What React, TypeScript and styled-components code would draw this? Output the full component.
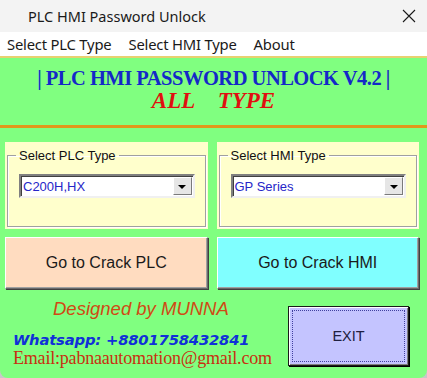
import React from 'react';
import styled, { createGlobalStyle } from 'styled-components';

const GlobalStyle = createGlobalStyle`
  html, body {
    margin: 0;
    padding: 0;
    background: #c8c8c8;
  }
`;

const Window = styled.div`
  width: 427px;
  height: 378px;
  display: flex;
  flex-direction: column;
  background: #80ff80;
  border-radius: 0 0 8px 8px;
  overflow: hidden;
  font-family: 'Liberation Sans', Arial, sans-serif;
`;

const TitleBar = styled.div`
  height: 32px;
  flex: none;
  display: flex;
  align-items: center;
  justify-content: space-between;
  padding: 0 10px 0 28px;
  background: #f3f3f3;
  font-family: 'Noto Sans', 'Open Sans', sans-serif;
  font-size: 14.5px;
  color: #1a1a1a;
`;

const CloseButton = styled.button`
  border: none;
  background: transparent;
  padding: 0;
  width: 16px;
  height: 16px;
  display: flex;
  align-items: center;
  justify-content: center;
`;

const MenuBar = styled.div`
  height: 24px;
  flex: none;
  display: flex;
  align-items: center;
  gap: 17px;
  padding: 0 7px;
  background: #ffffff;
  border-bottom: 2px solid #e8d070;
  font-family: 'Noto Sans', 'Open Sans', sans-serif;
  font-size: 14.8px;
  color: #1a1a1a;
`;

const MenuItem = styled.span`
  letter-spacing: -0.2px;
`;

const Header = styled.div`
  display: flex;
  flex-direction: column;
  align-items: center;
  padding-top: 9px;
  height: 58px;
  flex: none;
  border-bottom: 3px solid #e0981c;
  font-family: 'Liberation Serif', 'Times New Roman', serif;
  font-weight: bold;
`;

const HeadTitle = styled.div`
  color: #1428c8;
  font-size: 20.5px;
  line-height: 22px;
  letter-spacing: -0.5px;
`;

const HeadSub = styled.div`
  color: #e01010;
  font-size: 23px;
  line-height: 23px;
  font-style: italic;
  white-space: pre;
  word-spacing: 2px;
`;

const Content = styled.div`
  display: flex;
  flex-direction: column;
  padding: 14px 8px 0 5px;
`;

const Row = styled.div<{ gap: number }>`
  display: grid;
  grid-template-columns: 1fr 1fr;
  column-gap: ${({ gap }) => gap}px;
`;

const Panel = styled.div`
  background: #ffffcc;
  height: 87px;
  padding: 6px 2px 2px 2px;
  box-sizing: border-box;
`;

const Group = styled.fieldset`
  margin: 0;
  height: 100%;
  box-sizing: border-box;
  padding: 11px 10px 0 11px;
  border: 1px solid #a0a0a0;
  box-shadow: inset 1px 1px 0 #ffffff, 1px 1px 0 #ffffff;
`;

const Legend = styled.legend`
  padding: 0 3px;
  margin-left: -3px;
  font-size: 13px;
  color: #111;
`;

const Combo = styled.div`
  height: 24px;
  display: flex;
  align-items: stretch;
  background: #ffffff;
  border: 2px solid;
  border-color: #808080 #f0f0f0 #f0f0f0 #808080;
  box-sizing: border-box;
  box-shadow: inset 1px 1px 0 #404040;
`;

const ComboText = styled.span`
  flex: 1;
  display: flex;
  align-items: center;
  padding-left: 2px;
  font-size: 13px;
  color: #2626c8;
`;

const ComboArrow = styled.span`
  width: 17px;
  margin: 1px;
  background: #e6e6e6;
  border: 1px solid;
  border-color: #ffffff #7a7a7a #7a7a7a #ffffff;
  display: flex;
  align-items: center;
  justify-content: center;
  &::after {
    content: '';
    border-left: 4px solid transparent;
    border-right: 4px solid transparent;
    border-top: 4px solid #000;
    margin-top: 1px;
  }
`;

const BigButton = styled.button<{ bg: string }>`
  height: 52px;
  margin-top: 8px;
  background: ${({ bg }) => bg};
  border: 1px solid;
  border-color: #ffffff #6a6a6a #6a6a6a #ffffff;
  box-shadow: 1px 1px 0 #404040, inset -1px -1px 0 #a0a0a0;
  font-family: 'Liberation Sans', Arial, sans-serif;
  font-size: 16px;
  color: #1a1a1a;
  padding: 0;
`;

const Footer = styled.div`
  display: flex;
  justify-content: space-between;
  padding: 8px 18px 0 8px;
`;

const Credits = styled.div`
  display: flex;
  flex-direction: column;
  padding-left: 5px;
`;

const Designer = styled.div`
  padding-left: 40px;
  font-style: italic;
  font-size: 18.5px;
  line-height: 23px;
  color: #d04a14;
`;

const Whatsapp = styled.div`
  margin-top: 11px;
  font-family: 'DejaVu Sans', Verdana, sans-serif;
  font-weight: bold;
  font-style: italic;
  font-size: 14.8px;
  line-height: 17px;
  color: #1030d8;
  letter-spacing: -0.2px;
`;

const Email = styled.div`
  font-family: 'Liberation Serif', 'Times New Roman', serif;
  font-size: 18px;
  line-height: 20px;
  color: #c83010;
  letter-spacing: -0.2px;
`;

const ExitButton = styled.button`
  width: 121px;
  height: 60px;
  margin-top: 9px;
  padding: 3px;
  background: #c4c4ff;
  border: 1px solid #1a1a1a;
  box-shadow: inset 1px 1px 0 #ffffff, inset -1px -1px 0 #808080, 1px 1px 0 #000;
`;

const ExitFocus = styled.span`
  display: flex;
  align-items: center;
  justify-content: center;
  height: 100%;
  box-sizing: border-box;
  border: 1px dotted #4040a0;
  font-family: 'Liberation Sans', Arial, sans-serif;
  font-size: 14.5px;
  color: #202040;
`;

const App: React.FC = () => {
  return (
    <>
      <GlobalStyle />
      <Window>
        <TitleBar>
          <span>PLC HMI Password Unlock</span>
          <CloseButton aria-label="Close">
            <svg width="14" height="14" viewBox="0 0 14 14">
              <path d="M1 1 L13 13 M13 1 L1 13" stroke="#1a1a1a" strokeWidth="1.1" />
            </svg>
          </CloseButton>
        </TitleBar>
        <MenuBar>
          <MenuItem>Select PLC Type</MenuItem>
          <MenuItem>Select HMI Type</MenuItem>
          <MenuItem>About</MenuItem>
        </MenuBar>
        <Header>
          <HeadTitle>| PLC HMI PASSWORD UNLOCK V4.2 |</HeadTitle>
          <HeadSub>{'ALL   TYPE'}</HeadSub>
        </Header>
        <Content>
          <Row gap={9}>
            <Panel>
              <Group>
                <Legend>Select PLC Type</Legend>
                <Combo>
                  <ComboText>C200H,HX</ComboText>
                  <ComboArrow />
                </Combo>
              </Group>
            </Panel>
            <Panel>
              <Group>
                <Legend>Select HMI Type</Legend>
                <Combo>
                  <ComboText>GP Series</ComboText>
                  <ComboArrow />
                </Combo>
              </Group>
            </Panel>
          </Row>
          <Row gap={9}>
            <BigButton bg="#ffdcc0">Go to Crack PLC</BigButton>
            <BigButton bg="#80ffff">Go to Crack HMI</BigButton>
          </Row>
        </Content>
        <Footer>
          <Credits>
            <Designer>Designed by MUNNA</Designer>
            <Whatsapp>Whatsapp: +8801758432841</Whatsapp>
            <Email>Email:pabnaautomation@gmail.com</Email>
          </Credits>
          <ExitButton>
            <ExitFocus>EXIT</ExitFocus>
          </ExitButton>
        </Footer>
      </Window>
    </>
  );
};

export default App;
